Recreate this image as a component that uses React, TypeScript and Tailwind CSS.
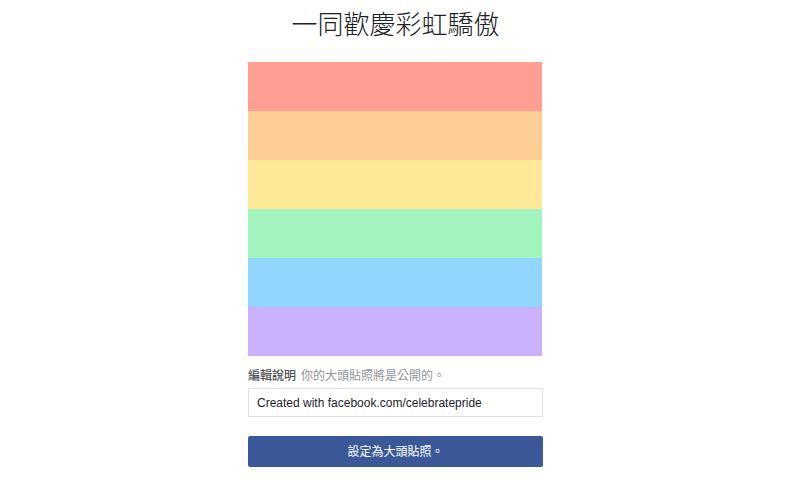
import React from 'react';

const stripes = ['bg-[#ff9f93]', 'bg-[#ffce94]', 'bg-[#ffe898]', 'bg-[#a3f5c0]', 'bg-[#91d6fe]', 'bg-[#cbb2fe]'];

const App = () => {
  return (
    <div
      className="min-h-[498px] w-full bg-white flex justify-center pr-[9px]"
      style={{ fontFamily: '"Liberation Sans", "Noto Sans CJK TC", sans-serif' }}
    >
      <div className="w-[295px] flex flex-col">
        {/* Title */}
        <h1 className="h-[62px] flex items-center justify-center text-[26px] text-[#1d2129] font-light pb-[12px] whitespace-nowrap">
          一同歡慶彩虹驕傲
        </h1>

        {/* Rainbow preview */}
        <div className="w-[294px] flex flex-col">
          {stripes.map((c) => (
            <div key={c} className={`h-[49px] ${c}`} />
          ))}
        </div>

        {/* Caption label */}
        <div className="mt-[12px] h-[16px] flex items-center text-[12px] leading-none">
          <span className="font-medium text-[#4b4f56]">編輯說明</span>
          <span className="ml-[5px] text-[#90949c]">你的大頭貼照將是公開的。</span>
        </div>

        {/* Caption input */}
        <input
          readOnly
          value="Created with facebook.com/celebratepride"
          className="mt-[4px] h-[29px] w-full border border-[#dddfe2] px-[8px] text-[12px] text-[#1d2129] outline-none"
        />

        {/* Submit */}
        <button className="mt-[19px] h-[31px] w-full rounded-[2px] bg-[#3b5998] text-white text-[12px]">
          設定為大頭貼照。
        </button>
      </div>
    </div>
  );
};

export default App;
